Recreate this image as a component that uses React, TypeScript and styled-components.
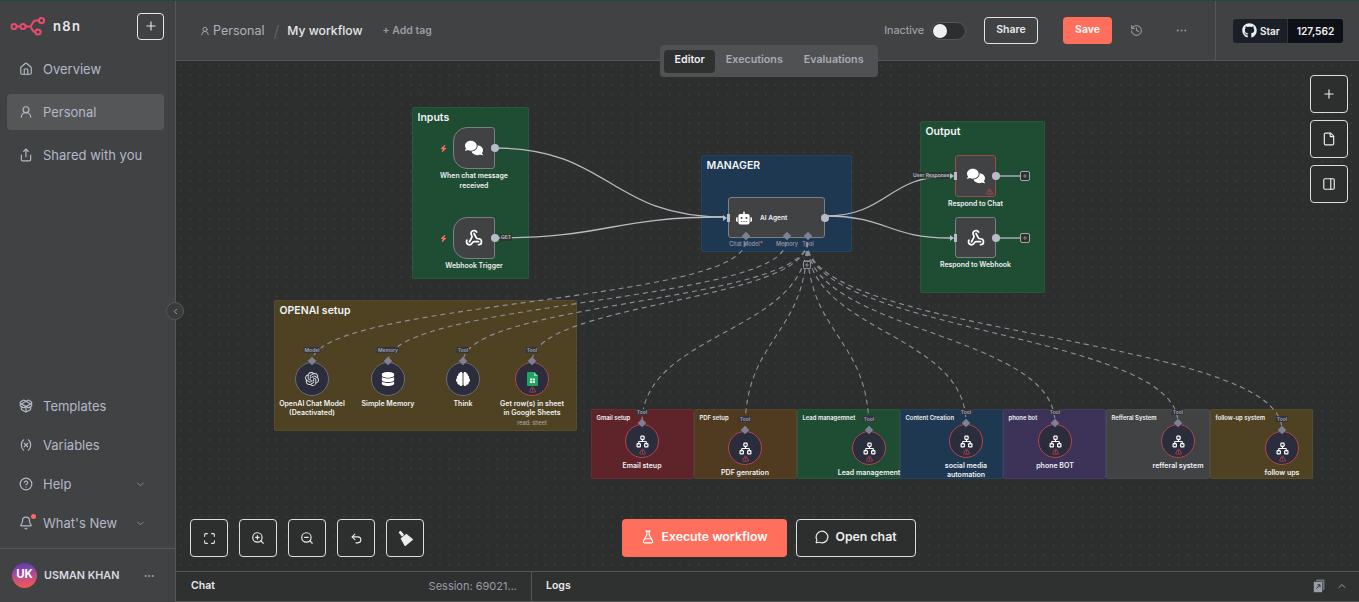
import { FC, ReactNode } from "react";
import styled, { createGlobalStyle } from "styled-components";
import {
  ChevronDown,
  ChevronLeft,
  ChevronUp,
  CircleHelp,
  Bell,
  Ellipsis,
  File,
  FlaskConical,
  History,
  House,
  Maximize,
  MessageCircle,
  Network,
  PackageOpen,
  PanelRight,
  Plus,
  Share,
  TriangleAlert,
  Undo2,
  UserRound,
  Variable,
  Webhook,
  ZoomIn,
  ZoomOut,
} from "lucide-react";
import {
  FaBolt,
  FaBrain,
  FaComments,
  FaDatabase,
  FaGithub,
  FaRobot,
} from "react-icons/fa6";
import { SiOpenai } from "react-icons/si";

// the canvas starts here, node data below is in page coordinates
const ORIGIN_X = 176;
const ORIGIN_Y = 61;

const tones: Record<string, string> = {
  green: "#1f4d34",
  blue: "#1d3850",
  yellow: "#4e4222",
  red: "#5f2429",
  brown: "#503a20",
  purple: "#3d3358",
  gray: "#414244",
};

interface NoteData {
  title: string;
  x: number;
  y: number;
  w: number;
  h: number;
  tone: string;
  size: number;
}

const notes: NoteData[] = [
  { title: "Inputs", x: 412, y: 107, w: 117, h: 172, tone: "green", size: 10.5 },
  { title: "MANAGER", x: 701, y: 155, w: 151, h: 97, tone: "blue", size: 10.5 },
  { title: "Output", x: 920, y: 121, w: 125, h: 172, tone: "green", size: 10.5 },
  { title: "OPENAI setup", x: 274, y: 300, w: 303, h: 131, tone: "yellow", size: 10.5 },
  { title: "Gmail setup", x: 591, y: 409, w: 103, h: 70, tone: "red", size: 5.9 },
  { title: "PDF setup", x: 694, y: 409, w: 103, h: 70, tone: "brown", size: 5.9 },
  { title: "Lead managemnet", x: 797, y: 409, w: 103, h: 70, tone: "green", size: 5.9 },
  { title: "Content Creation", x: 900, y: 409, w: 103, h: 70, tone: "blue", size: 5.9 },
  { title: "phone bot", x: 1003, y: 409, w: 103, h: 70, tone: "purple", size: 5.9 },
  { title: "Refferal System", x: 1106, y: 409, w: 104, h: 70, tone: "gray", size: 5.9 },
  { title: "follow-up system", x: 1210, y: 409, w: 103, h: 70, tone: "yellow", size: 5.9 },
];

const toolNodes = [
  { x: 642, y: 441, label: ["Email steup"] },
  { x: 745, y: 448, label: ["PDF genration"] },
  { x: 869, y: 448, label: ["Lead management"] },
  { x: 966, y: 441, label: ["social media", "automation"] },
  { x: 1055, y: 441, label: ["phone BOT"] },
  { x: 1178, y: 441, label: ["refferal system"] },
  { x: 1282, y: 448, label: ["follow ups"] },
];

const vertical = (x1: number, y1: number, x2: number, y2: number) => {
  const mid = Math.max(40, (y2 - y1) / 2);
  return `M${x1} ${y1} C${x1} ${y1 + mid}, ${x2} ${y2 - mid}, ${x2} ${y2}`;
};

const horizontal = (x1: number, y1: number, x2: number, y2: number) => {
  const mid = (x2 - x1) / 2;
  return `M${x1} ${y1} C${x1 + mid} ${y1}, ${x2 - mid} ${y2}, ${x2} ${y2}`;
};

const solidEdges = [
  horizontal(495, 148, 724, 217),
  horizontal(495, 238, 724, 217),
  horizontal(825, 216, 950, 176),
  horizontal(825, 216, 950, 238),
  "M996 176 H1020",
  "M996 238 H1020",
];

const dashedEdges = [
  vertical(745, 242, 312, 362),
  vertical(786, 242, 388, 362),
  vertical(807, 242, 463, 362),
  vertical(807, 242, 532, 362),
  ...toolNodes.map((t) => vertical(807, 242, t.x, t.y - 18)),
];

const GlobalStyle = createGlobalStyle`
  html, body {
    margin: 0;
    height: 100%;
    overflow: hidden;
    background: #2d2e2e;
    font-family: Inter, "Liberation Sans", sans-serif;
  }
  * {
    box-sizing: border-box;
  }
`;

const N8nLogo: FC = () => (
  <svg width="36" height="20" viewBox="0 0 36 20" fill="none" stroke="#ea4b71" strokeWidth="2">
    <circle cx="4" cy="10.5" r="2.6" />
    <circle cx="13" cy="10.5" r="2.6" />
    <circle cx="31.5" cy="4.5" r="2.6" />
    <circle cx="28" cy="16" r="2.6" />
    <path d="M6.6 10.5 H10.4 M15.6 10.5 H20 C22.5 10.5 22 4.5 25.5 4.5 H28.9 M20 10.5 C22 10.5 21.5 16 25.4 16" />
  </svg>
);

const SheetsIcon: FC = () => (
  <svg width="11" height="14" viewBox="0 0 11 14">
    <path d="M1 0 H7 L11 4 V13 a1 1 0 0 1 -1 1 H1 a1 1 0 0 1 -1 -1 V1 a1 1 0 0 1 1 -1z" fill="#20a464" />
    <path d="M7 0 L11 4 H7z" fill="#8ed1b1" />
    <rect x="3" y="6.5" width="5" height="4.5" fill="#e6f4ea" />
    <path d="M3 8.7 H8 M5.5 6.5 V11" stroke="#20a464" strokeWidth="0.6" />
  </svg>
);

const PopOutIcon: FC = () => (
  <svg width="12" height="14" viewBox="0 0 12 14">
    <rect x="3" y="0.5" width="8.5" height="10.5" rx="1" fill="#6f727a" />
    <rect x="0.5" y="2.5" width="9" height="11" rx="1" fill="#9a9da6" stroke="#2f3030" strokeWidth="0.6" />
    <path d="M3.5 9.5 L6.8 6 M4.5 5.8 H7 V8.3" fill="none" stroke="#2f3030" strokeWidth="1" />
  </svg>
);

const BroomIcon: FC = () => (
  <svg width="16" height="16" viewBox="0 0 16 16" fill="#ececee">
    <g transform="rotate(-40 8 8)">
      <rect x="6.6" y="-0.5" width="2.8" height="5.5" rx="0.6" />
      <path d="M4.2 5.6 H11.8 L13.4 14.5 H2.6z" />
    </g>
  </svg>
);

interface CircleNodeProps {
  x: number;
  y: number;
  kind: string;
  label: string[];
  sub?: string;
  error?: boolean;
  children: ReactNode;
}

const CircleNode: FC<CircleNodeProps> = ({ x, y, kind, label, sub, error, children }) => (
  <CircleWrap $x={x} $y={y}>
    <KindTag>{kind}</KindTag>
    <Diamond $top={-4} />
    <Circle $error={error}>
      {children}
      {error && (
        <WarnMark>
          <TriangleAlert size={7} strokeWidth={2.6} />
        </WarnMark>
      )}
    </Circle>
    <NodeLabel>
      {label.map((line) => (
        <div key={line}>{line}</div>
      ))}
      {sub && <SubLabel>{sub}</SubLabel>}
    </NodeLabel>
  </CircleWrap>
);

const App: FC = () => (
  <>
    <GlobalStyle />
    <Shell>
      <Sidebar>
        <LogoRow>
          <N8nLogo />
          <LogoText>n8n</LogoText>
          <AddButton>
            <Plus size={14} />
          </AddButton>
        </LogoRow>
        <NavGroup>
          <NavItem>
            <House size={14} />
            Overview
          </NavItem>
          <NavItem $active>
            <UserRound size={14} />
            Personal
          </NavItem>
          <NavItem>
            <Share size={14} />
            Shared with you
          </NavItem>
        </NavGroup>
        <BottomNav>
          <BottomItem>
            <PackageOpen size={14} />
            Templates
          </BottomItem>
          <BottomItem>
            <Variable size={14} />
            Variables
          </BottomItem>
          <BottomItem>
            <CircleHelp size={14} />
            Help
            <Chevron>
              <ChevronDown size={11} />
            </Chevron>
          </BottomItem>
          <BottomItem>
            <BellWrap>
              <Bell size={14} />
              <BellDot />
            </BellWrap>
            What's New
            <Chevron>
              <ChevronDown size={11} />
            </Chevron>
          </BottomItem>
        </BottomNav>
        <UserRow>
          <Avatar>UK</Avatar>
          <UserName>USMAN KHAN</UserName>
          <UserMore>
            <Ellipsis size={12} />
          </UserMore>
        </UserRow>
        <Collapse>
          <ChevronLeft size={9} />
        </Collapse>
      </Sidebar>
      <Main>
        <Header>
          <Crumbs>
            <UserRound size={10} color="#b0b2b8" />
            <CrumbProject>Personal</CrumbProject>
            <CrumbSlash>/</CrumbSlash>
            <CrumbName>My workflow</CrumbName>
            <AddTag>+ Add tag</AddTag>
          </Crumbs>
          <HeaderActions>
            <StateLabel>Inactive</StateLabel>
            <Toggle>
              <Knob />
            </Toggle>
            <ShareButton>Share</ShareButton>
            <SaveButton>Save</SaveButton>
            <HistoryIcon>
              <History size={13} />
            </HistoryIcon>
            <MoreIcon>
              <Ellipsis size={13} />
            </MoreIcon>
          </HeaderActions>
          <GithubSlot>
            <GithubStar>
              <FaGithub size={15} />
              Star
            </GithubStar>
            <GithubCount>127,562</GithubCount>
          </GithubSlot>
          <Tabs>
            <Tab $active>Editor</Tab>
            <Tab>Executions</Tab>
            <Tab>Evaluations</Tab>
          </Tabs>
        </Header>
        <Canvas>
          {notes.map((n) => (
            <Sticky key={n.title} $x={n.x} $y={n.y} $w={n.w} $h={n.h} $bg={tones[n.tone]}>
              <StickyTitle $size={n.size}>{n.title}</StickyTitle>
            </Sticky>
          ))}
          <EdgeLayer width="1183" height="510" viewBox={`${ORIGIN_X} ${ORIGIN_Y} 1183 510`}>
            {dashedEdges.map((d) => (
              <path key={d} d={d} fill="none" stroke="#8f909c" strokeWidth="1.1" strokeDasharray="5 4" />
            ))}
            {solidEdges.map((d) => (
              <path key={d} d={d} fill="none" stroke="#b9bbc3" strokeWidth="1.3" />
            ))}
          </EdgeLayer>

          <FlowNode $x={453} $y={127} $w={42} $h={42} $trigger>
            <FaComments size={18} color="#fff" />
            <OutDot />
            <FlowLabel>
              <div>When chat message</div>
              <div>received</div>
            </FlowLabel>
            <TriggerBolt>
              <FaBolt size={7} />
            </TriggerBolt>
          </FlowNode>
          <FlowNode $x={453} $y={217} $w={42} $h={42} $trigger>
            <Webhook size={18} color="#fff" strokeWidth={2.3} />
            <OutDot />
            <EdgeTag $left={46} $top={16}>GET</EdgeTag>
            <FlowLabel>
              <div>Webhook Trigger</div>
            </FlowLabel>
            <TriggerBolt>
              <FaBolt size={7} />
            </TriggerBolt>
          </FlowNode>

          <AgentNode>
            <InHandle />
            <FaRobot size={16} color="#fff" />
            <AgentName>AI Agent</AgentName>
            <OutDot />
            <AgentPort $left={17}>
              <Diamond $top={-4} />
              <PortName>
                Chat Model<Required>*</Required>
              </PortName>
            </AgentPort>
            <AgentPort $left={58}>
              <Diamond $top={-4} />
              <PortName>Memory</PortName>
            </AgentPort>
            <AgentPort $left={79}>
              <Diamond $top={-4} />
              <PortName>Tool</PortName>
            </AgentPort>
            <AgentPlus>
              <Plus size={6} strokeWidth={2} />
            </AgentPlus>
          </AgentNode>

          <FlowNode $x={955} $y={155} $w={41} $h={42} $error>
            <FaComments size={18} color="#fff" />
            <InHandle />
            <OutDot />
            <EdgeTag $left={-44} $top={16}>User Response</EdgeTag>
            <OutPlus>
              <Plus size={6} strokeWidth={2} />
            </OutPlus>
            <CornerWarn>
              <TriangleAlert size={7} strokeWidth={2.4} />
            </CornerWarn>
            <FlowLabel>
              <div>Respond to Chat</div>
            </FlowLabel>
          </FlowNode>
          <FlowNode $x={955} $y={217} $w={41} $h={41}>
            <Webhook size={18} color="#fff" strokeWidth={2.3} />
            <InHandle />
            <OutDot />
            <OutPlus>
              <Plus size={6} strokeWidth={2} />
            </OutPlus>
            <FlowLabel>
              <div>Respond to Webhook</div>
            </FlowLabel>
          </FlowNode>

          <CircleNode x={312} y={379} kind="Model" label={["OpenAI Chat Model", "(Deactivated)"]}>
            <SiOpenai size={14} color="#e8e8e8" />
          </CircleNode>
          <CircleNode x={388} y={379} kind="Memory" label={["Simple Memory"]}>
            <FaDatabase size={14} color="#fff" />
          </CircleNode>
          <CircleNode x={463} y={379} kind="Tool" label={["Think"]}>
            <FaBrain size={14} color="#fff" />
          </CircleNode>
          <CircleNode
            x={532}
            y={379}
            kind="Tool"
            label={["Get row(s) in sheet", "in Google Sheets"]}
            sub="read: sheet"
            error
          >
            <SheetsIcon />
          </CircleNode>

          {toolNodes.map((t) => (
            <CircleNode key={t.x} x={t.x} y={t.y} kind="Tool" label={t.label} error>
              <Network size={13} color="#fff" strokeWidth={2.2} />
            </CircleNode>
          ))}

          <SideTools>
            <SquareButton>
              <Plus size={14} />
            </SquareButton>
            <SquareButton>
              <File size={14} />
            </SquareButton>
            <SquareButton>
              <PanelRight size={14} />
            </SquareButton>
          </SideTools>
          <ZoomTools>
            <SquareButton>
              <Maximize size={13} />
            </SquareButton>
            <SquareButton>
              <ZoomIn size={14} />
            </SquareButton>
            <SquareButton>
              <ZoomOut size={14} />
            </SquareButton>
            <SquareButton>
              <Undo2 size={13} />
            </SquareButton>
            <SquareButton>
              <BroomIcon />
            </SquareButton>
          </ZoomTools>
          <RunTools>
            <ExecuteButton>
              <FlaskConical size={14} />
              Execute workflow
            </ExecuteButton>
            <ChatButton>
              <MessageCircle size={14} />
              Open chat
            </ChatButton>
          </RunTools>
        </Canvas>
        <LogsBar>
          <ChatPane>
            <PaneTitle>Chat</PaneTitle>
            <Session>Session: 69021...</Session>
          </ChatPane>
          <LogsPane>
            <PaneTitle>Logs</PaneTitle>
            <LogsIcons>
              <PopOutIcon />
              <ChevronUp size={12} />
            </LogsIcons>
          </LogsPane>
        </LogsBar>
      </Main>
    </Shell>
  </>
);

const Shell = styled.div`
  display: grid;
  grid-template-columns: 176px 1fr;
  width: 100vw;
  height: 100vh;
  overflow: hidden;
  border-top: 1px solid #1f4d34;
`;

const Sidebar = styled.aside`
  position: relative;
  display: flex;
  flex-direction: column;
  background: #414244;
  border-right: 1px solid #555658;
`;

const LogoRow = styled.div`
  display: flex;
  align-items: center;
  height: 50px;
  padding: 0 11px 0 10px;
`;

const LogoText = styled.span`
  margin-left: 7px;
  font-size: 13px;
  font-weight: 600;
  letter-spacing: 1.4px;
  color: #e8e8ea;
`;

const AddButton = styled.button`
  display: flex;
  align-items: center;
  justify-content: center;
  width: 27px;
  height: 27px;
  margin-left: auto;
  padding: 0;
  border: 1px solid #e6e6e8;
  border-radius: 4px;
  background: transparent;
  color: #e6e6e8;
`;

const NavGroup = styled.nav`
  display: flex;
  flex-direction: column;
  gap: 7px;
  padding: 0 11px 0 7px;
`;

const NavItem = styled.div<{ $active?: boolean }>`
  display: flex;
  align-items: center;
  gap: 10px;
  height: 36px;
  padding: 0 0 1px 12px;
  border-radius: 4px;
  font-size: 13px;
  color: #b3b9c7;
  background: ${(props) => (props.$active ? "#555658" : "transparent")};
`;

const BottomNav = styled.nav`
  display: flex;
  flex-direction: column;
  margin-top: auto;
  padding: 0 11px 5px 7px;
`;

const BottomItem = styled(NavItem)`
  height: 39px;
`;

const Chevron = styled.span`
  display: flex;
  margin-left: auto;
  margin-right: 18px;
  color: #8f929a;
`;

const BellWrap = styled.span`
  position: relative;
  display: flex;
`;

const BellDot = styled.span`
  position: absolute;
  top: -2px;
  right: -3px;
  width: 5px;
  height: 5px;
  border-radius: 50%;
  background: #ff6d5a;
`;

const UserRow = styled.div`
  display: flex;
  align-items: center;
  height: 54px;
  padding: 0 20px 0 12px;
  border-top: 1px solid #555658;
`;

const Avatar = styled.div`
  display: flex;
  align-items: center;
  justify-content: center;
  width: 25px;
  height: 25px;
  padding-bottom: 3px;
  border-radius: 50%;
  font-size: 11.5px;
  font-weight: 700;
  color: #fff;
  background: linear-gradient(175deg, #5638b8 0%, #a44a9c 40%, #ff5a48 100%);
`;

const UserName = styled.span`
  margin-left: 7px;
  font-size: 10.8px;
  font-weight: 600;
  color: #d8dae0;
`;

const UserMore = styled.span`
  display: flex;
  margin-left: auto;
  color: #a8abb3;
`;

const Collapse = styled.div`
  position: absolute;
  top: 301px;
  right: -9px;
  z-index: 5;
  display: flex;
  align-items: center;
  justify-content: center;
  width: 18px;
  height: 18px;
  border: 1px solid #555658;
  border-radius: 50%;
  background: #3a3b3d;
  color: #b8bbc3;
`;

const Main = styled.main`
  display: flex;
  flex-direction: column;
  min-width: 0;
`;

const Header = styled.header`
  position: relative;
  z-index: 3;
  display: flex;
  align-items: center;
  flex: 0 0 60px;
  padding-left: 24px;
  background: #414244;
  border-bottom: 1px solid #555658;
`;

const Crumbs = styled.div`
  display: flex;
  align-items: center;
  flex: 1;
`;

const CrumbProject = styled.span`
  margin-left: 3px;
  font-size: 12.5px;
  color: #b0b2b8;
`;

const CrumbSlash = styled.span`
  margin: 0 8px 0 9px;
  font-size: 16px;
  color: #5f6064;
`;

const CrumbName = styled.span`
  font-size: 12.2px;
  font-weight: 500;
  color: #e6e7ea;
`;

const AddTag = styled.span`
  margin-left: 20px;
  font-size: 10.5px;
  font-weight: 600;
  color: #9a9ca3;
`;

const HeaderActions = styled.div`
  display: flex;
  align-items: center;
  flex: 0 0 auto;
  height: 100%;
  padding-right: 27px;
`;

const StateLabel = styled.span`
  font-size: 10.8px;
  color: #a9acb5;
`;

const Toggle = styled.div`
  display: flex;
  align-items: center;
  width: 35px;
  height: 18px;
  margin: 0 18px 0 7px;
  padding-left: 1px;
  border: 1px solid #555658;
  border-radius: 9px;
  background: #2d2e2e;
`;

const Knob = styled.span`
  width: 14px;
  height: 14px;
  border-radius: 50%;
  background: #f0f0f4;
`;

const ShareButton = styled.button`
  width: 54px;
  height: 27px;
  padding: 0 0 2px;
  border: 1px solid #e2e3e6;
  border-radius: 4px;
  background: transparent;
  font: 600 10.5px Inter, sans-serif;
  color: #e8e9ec;
`;

const SaveButton = styled.button`
  width: 49px;
  height: 27px;
  margin-left: 25px;
  padding: 0 0 2px;
  border: none;
  border-radius: 4px;
  background: #ff6f5c;
  font: 600 10.5px Inter, sans-serif;
  color: #fff;
`;

const HeaderGlyph = styled.span`
  display: flex;
  color: #8f929a;
`;

const HistoryIcon = styled(HeaderGlyph)`
  margin-left: 18px;
`;

const MoreIcon = styled(HeaderGlyph)`
  margin-left: 32px;
`;

const GithubSlot = styled.div`
  display: flex;
  align-items: center;
  flex: 0 0 144px;
  height: 100%;
  padding-left: 17px;
  border-left: 1px solid #555658;
`;

const GithubStar = styled.div`
  display: flex;
  align-items: center;
  gap: 3px;
  width: 54px;
  height: 24px;
  padding-left: 9px;
  border-radius: 3px 0 0 3px;
  background: #1b2028;
  font-size: 10px;
  font-weight: 600;
  color: #f0f0f2;
`;

const GithubCount = styled.div`
  display: flex;
  align-items: center;
  justify-content: center;
  width: 56px;
  height: 24px;
  border-left: 1px solid #30363d;
  border-radius: 0 3px 3px 0;
  background: #0d1117;
  font-size: 10.2px;
  font-weight: 600;
  color: #f0f0f2;
`;

const Tabs = styled.div`
  position: absolute;
  top: 44px;
  left: 484px;
  display: flex;
  align-items: center;
  width: 218px;
  height: 32px;
  padding: 4px;
  border-radius: 4px;
  background: #505153;
`;

const Tab = styled.span<{ $active?: boolean }>`
  height: 23px;
  padding: 0 10.5px;
  border-radius: 4px;
  font-size: 10.7px;
  font-weight: 600;
  line-height: 20px;
  color: ${(props) => (props.$active ? "#eceef2" : "#a8abb4")};
  background: ${(props) => (props.$active ? "#2f3030" : "transparent")};
`;

const Canvas = styled.section`
  position: relative;
  flex: 1;
  overflow: hidden;
  background-color: #2d2e2e;
  background-image: radial-gradient(circle, #4a4b4c 0.5px, transparent 0.8px);
  background-size: 9.6px 9.6px;
`;

const Sticky = styled.div<{ $x: number; $y: number; $w: number; $h: number; $bg: string }>`
  position: absolute;
  left: ${(props) => props.$x - ORIGIN_X}px;
  top: ${(props) => props.$y - ORIGIN_Y}px;
  width: ${(props) => props.$w}px;
  height: ${(props) => props.$h}px;
  padding: 3px 4.5px;
  border: 1px solid rgba(255, 255, 255, 0.05);
  border-radius: 2px;
  background: ${(props) => props.$bg};
`;

const StickyTitle = styled.div<{ $size: number }>`
  font-size: ${(props) => props.$size}px;
  font-weight: 600;
  line-height: ${(props) => (props.$size > 8 ? "13px" : "10px")};
  color: #f2f3f5;
`;

const EdgeLayer = styled.svg`
  position: absolute;
  top: 0;
  left: 0;
`;

const FlowNode = styled.div<{
  $x: number;
  $y: number;
  $w: number;
  $h: number;
  $trigger?: boolean;
  $error?: boolean;
}>`
  position: absolute;
  left: ${(props) => props.$x - ORIGIN_X}px;
  top: ${(props) => props.$y - ORIGIN_Y}px;
  display: flex;
  align-items: center;
  justify-content: center;
  width: ${(props) => props.$w}px;
  height: ${(props) => props.$h}px;
  border: 1px solid ${(props) => (props.$error ? "#a04a4c" : "#7d7f84")};
  border-radius: ${(props) => (props.$trigger ? "14px 3px 3px 14px" : "3px")};
  background: #414244;
`;

const OutDot = styled.span`
  position: absolute;
  top: 50%;
  right: -5px;
  width: 8px;
  height: 8px;
  margin-top: -4px;
  border-radius: 50%;
  background: #b9bcc8;
`;

const InHandle = styled.span`
  position: absolute;
  top: 50%;
  left: -2px;
  width: 3px;
  height: 8px;
  margin-top: -4px;
  background: #b9bcc8;

  &::before {
    content: "";
    position: absolute;
    top: 1px;
    left: -4px;
    border-top: 3px solid transparent;
    border-bottom: 3px solid transparent;
    border-left: 4px solid #b9bcc8;
  }
`;

const FlowLabel = styled.div`
  position: absolute;
  top: calc(100% + 3px);
  left: 50%;
  width: 110px;
  margin-left: -55px;
  font-size: 6.9px;
  font-weight: 600;
  line-height: 9.5px;
  text-align: center;
  color: #f0f1f4;
`;

const TriggerBolt = styled.span`
  position: absolute;
  top: 17px;
  left: -14px;
  display: flex;
  color: #ff6d5a;
`;

const EdgeTag = styled.span<{ $left: number; $top: number }>`
  position: absolute;
  left: ${(props) => props.$left}px;
  top: ${(props) => props.$top}px;
  padding: 0 1px;
  font-size: 5px;
  font-weight: 600;
  line-height: 7px;
  white-space: nowrap;
  color: #b8bac4;
  background: rgba(45, 46, 46, 0.7);
`;

const AgentNode = styled.div`
  position: absolute;
  left: ${728 - ORIGIN_X}px;
  top: ${197 - ORIGIN_Y}px;
  display: flex;
  align-items: center;
  width: 97px;
  height: 41px;
  padding-left: 7px;
  border: 1px solid #7d7f84;
  border-radius: 3px;
  background: #414244;
`;

const AgentName = styled.span`
  margin-left: 8px;
  font-size: 6.6px;
  font-weight: 600;
  color: #f0f1f4;
`;

const AgentPort = styled.div<{ $left: number }>`
  position: absolute;
  top: 100%;
  left: ${(props) => props.$left}px;
  width: 0;
  height: 0;
`;

const PortName = styled.span`
  position: absolute;
  top: 3px;
  left: 0;
  transform: translateX(-50%);
  font-size: 5.5px;
  font-weight: 600;
  line-height: 8px;
  white-space: nowrap;
  color: #8d8ea0;
`;

const Required = styled.span`
  color: #ff5a5a;
`;

const AgentPlus = styled.div`
  position: absolute;
  top: 63px;
  left: 74px;
  display: flex;
  align-items: center;
  justify-content: center;
  width: 8px;
  height: 8px;
  border: 1px solid #8f909c;
  border-radius: 1px;
  background: #2d2e2e;
  color: #d0d1d6;
`;

const OutPlus = styled.div`
  position: absolute;
  top: 50%;
  left: 64px;
  display: flex;
  align-items: center;
  justify-content: center;
  width: 10px;
  height: 10px;
  margin-top: -5px;
  border: 1px solid #a6a8ae;
  border-radius: 2px;
  background: #2d2e2e;
  color: #d0d1d6;
`;

const CornerWarn = styled.span`
  position: absolute;
  right: 2px;
  bottom: 1px;
  display: flex;
  color: #d0494f;
`;

const CircleWrap = styled.div<{ $x: number; $y: number }>`
  position: absolute;
  left: ${(props) => props.$x - ORIGIN_X - 60}px;
  top: ${(props) => props.$y - ORIGIN_Y - 17}px;
  display: flex;
  flex-direction: column;
  align-items: center;
  width: 120px;
`;

const KindTag = styled.span`
  position: absolute;
  top: -15px;
  left: 50%;
  transform: translateX(-50%);
  padding: 0 1px;
  font-size: 5px;
  font-weight: 600;
  line-height: 6px;
  color: #9fa1b5;
  background: #33343c;
`;

const Diamond = styled.span<{ $top: number }>`
  position: absolute;
  top: ${(props) => props.$top}px;
  left: 50%;
  z-index: 1;
  width: 6px;
  height: 6px;
  margin-left: -3px;
  transform: rotate(45deg);
  background: #7f8096;
`;

const Circle = styled.div<{ $error?: boolean }>`
  position: relative;
  display: flex;
  align-items: center;
  justify-content: center;
  width: 34px;
  height: 34px;
  border: 1px solid ${(props) => (props.$error ? "#b4444c" : "#6b6c72")};
  border-radius: 50%;
  background: #2b2d3d;
`;

const WarnMark = styled.span`
  position: absolute;
  bottom: 2px;
  left: 50%;
  display: flex;
  margin-left: -3.5px;
  color: #c4474f;
`;

const NodeLabel = styled.div`
  margin-top: 2.5px;
  font-size: 7px;
  font-weight: 600;
  line-height: 9.5px;
  text-align: center;
  white-space: nowrap;
  color: #f0f1f4;
`;

const SubLabel = styled.div`
  font-size: 5.5px;
  font-weight: 500;
  line-height: 10px;
  color: #a5a39a;
`;

const SquareButton = styled.button`
  display: flex;
  align-items: center;
  justify-content: center;
  width: 38px;
  height: 38px;
  padding: 0;
  border: 1px solid #dcdde0;
  border-radius: 4px;
  background: #2d2e2e;
  color: #ececee;
`;

const SideTools = styled.div`
  position: absolute;
  top: 14px;
  right: 11px;
  display: flex;
  flex-direction: column;
  gap: 7px;
`;

const ZoomTools = styled.div`
  position: absolute;
  bottom: 14px;
  left: 14px;
  display: flex;
  gap: 11px;
`;

const RunTools = styled.div`
  position: absolute;
  bottom: 14px;
  left: 446px;
  display: flex;
  gap: 9px;
`;

const ExecuteButton = styled.button`
  display: flex;
  align-items: center;
  justify-content: center;
  gap: 6px;
  width: 165px;
  height: 38px;
  padding: 0 0 3px;
  border: none;
  border-radius: 4px;
  background: #ff6f5c;
  font: 600 12.3px Inter, sans-serif;
  color: #fff;
`;

const ChatButton = styled.button`
  display: flex;
  align-items: center;
  justify-content: center;
  gap: 6px;
  width: 120px;
  height: 38px;
  padding: 0 0 3px;
  border: 1px solid #dcdde0;
  border-radius: 4px;
  background: #2d2e2e;
  font: 600 12.3px Inter, sans-serif;
  color: #eeeef0;
`;

const LogsBar = styled.footer`
  display: flex;
  flex: 0 0 31px;
  background: #2f3030;
  border-top: 1px solid #555658;
  border-bottom: 1px solid #555658;
`;

const ChatPane = styled.div`
  display: flex;
  align-items: center;
  justify-content: space-between;
  flex: 0 0 356px;
  padding: 0 14px 2px 15px;
  border-right: 1px solid #555658;
`;

const LogsPane = styled.div`
  display: flex;
  align-items: center;
  justify-content: space-between;
  flex: 1;
  padding: 0 11px 2px 14px;
`;

const PaneTitle = styled.span`
  font-size: 10.5px;
  font-weight: 600;
  color: #e8e9ec;
`;

const Session = styled.span`
  font-size: 11px;
  color: #9a9da6;
`;

const LogsIcons = styled.div`
  display: flex;
  align-items: center;
  gap: 11px;
  color: #9a9da6;
`;

export default App;
